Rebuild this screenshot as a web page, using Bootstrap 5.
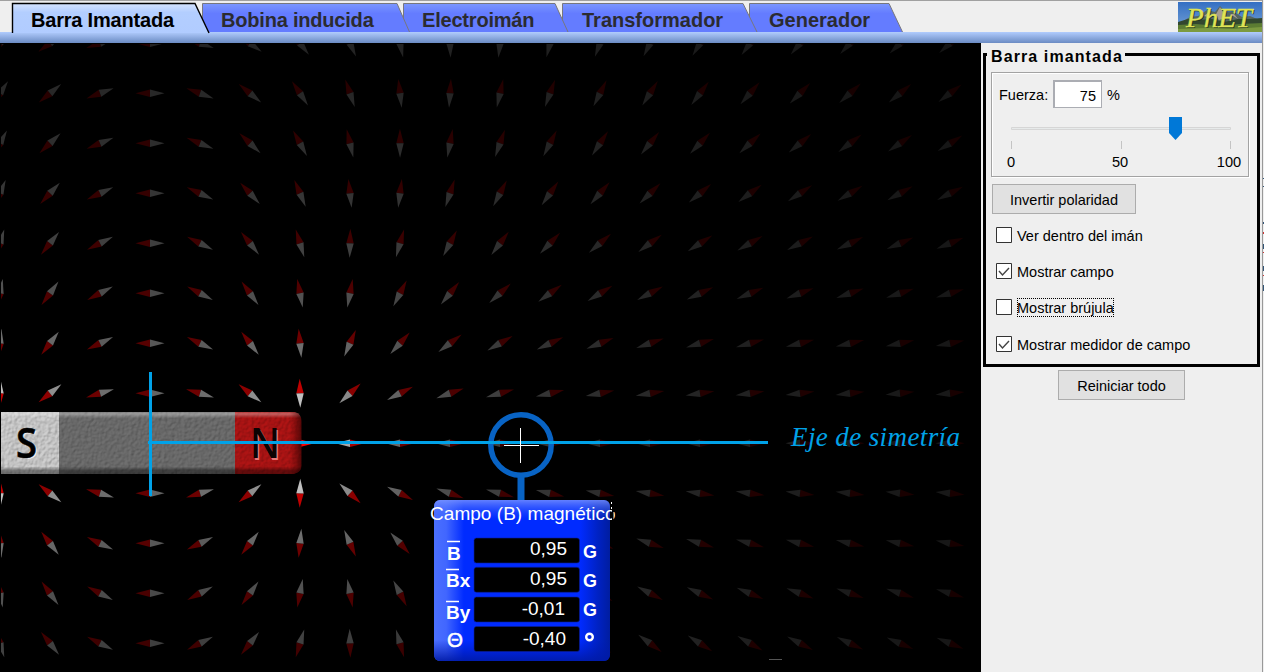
<!DOCTYPE html>
<html lang="es">
<head>
<meta charset="utf-8">
<meta name="viewport" content="width=device-width, initial-scale=1">
<title>Barra Imantada</title>
<link href="https://cdn.jsdelivr.net/npm/bootstrap@5.3.0/dist/css/bootstrap.min.css" rel="stylesheet">
<style>
body{font-family:"Liberation Sans",Arial,sans-serif;font-size:14.5px;line-height:18px;color:#000;background:#efefef;overflow:hidden}
.app{width:1264px;height:672px}
.window{width:1262px}
.tabrow{height:32px;border-top:1px solid #a0a0a0;padding-left:12px}
.tab{position:relative;height:31px;padding:0;color:#2b2b30;font-weight:700;font-size:20px;line-height:38px;white-space:nowrap;background:none;border:0;text-align:left}
.tab svg{position:absolute;left:0;top:0;overflow:visible}
.tab span{position:relative;display:inline-block;padding-left:19px;letter-spacing:-.2px}
.tab.wide span{padding-left:20px;letter-spacing:0}
.tab.on{color:#000}
.strip{height:11px;background:linear-gradient(#b1ccfd,#6b8bc3);}
.logo{width:84px;height:30px;margin-top:1px;overflow:visible}
.scene{width:981px;height:629px;background:#000}
.side{width:281px;padding:10px 0 0 2px}
.group{position:relative;width:277px;height:314px;border:3px solid #000}
.caption{position:absolute;left:1px;top:-9px;padding:0 2px 0 4px;background:#efefef;font-weight:700;font-size:16px;line-height:20px;letter-spacing:1.1px;white-space:nowrap}
.inset{width:258px;height:105px;margin:16px 0 0 5px;border:1px solid #a3a3a3;box-shadow:1px 1px 0 #fff,inset 1px 1px 0 #fff}
.num{width:49px;height:28px;border:2px solid #abadb3;border-right-width:1px;border-bottom-width:1px;background:#fff;padding:2px 5px 0 0;text-align:right;font:inherit;border-radius:0;outline:0;position:relative;top:-1px}
.slider{display:block;width:256px;height:66px}
.flat{border:1px solid #acacac;background:#e1e1e1;border-radius:0;padding:2px 0 0;height:30px;font:inherit;color:#000}
.opt{height:36px;gap:5px;padding-left:10px}
.opt svg{flex:none}
.opt span{padding-top:1px;margin-bottom:-1px}
.focus{outline:1px dotted #000;outline-offset:-1px}
</style>
</head>
<body>
<div class="app d-flex">
<div class="window d-flex flex-column">
<header class="tabrow d-flex justify-content-between">
<nav class="d-flex">
<button class="tab on" style="width:190px;z-index:5"><svg width="200" height="32"><path fill="url(#tabOn)" stroke="#000" stroke-width="1.4" d="M.5 32V2.5H183L197 32"/></svg><span>Barra Imantada</span></button>
<button class="tab" style="width:201px;z-index:4"><svg width="208" height="32"><path fill="url(#tabOff)" stroke="#77777d" d="M.5 31V2.5H195L207.500 31"/></svg><span>Bobina inducida</span></button>
<button class="tab" style="width:159px;z-index:3"><svg width="166" height="32"><path fill="url(#tabOff)" stroke="#77777d" d="M.5 31V2.500H152L165 31"/></svg><span>Electroimán</span></button>
<button class="tab wide" style="width:187px;z-index:2"><svg width="196" height="32"><path fill="url(#tabOff)" stroke="#77777d" d="M.5 31V2.500H181L195 31"/></svg><span>Transformador</span></button>
<button class="tab wide" style="width:155px;z-index:1"><svg width="155" height="32"><path fill="url(#tabOff)" stroke="#77777d" d="M.5 31V2.500H140L153.500 31"/></svg><span>Generador</span></button>
</nav>
<svg class="logo" viewBox="0 0 84 30">
<defs>
<linearGradient id="tabOn" x2="0" y2="1"><stop stop-color="#d5e4ff"/><stop offset=".3" stop-color="#b3ceff"/><stop offset="1" stop-color="#b1ccff"/></linearGradient>
<linearGradient id="tabOff" x2="0" y2="1"><stop stop-color="#7b97ff"/><stop offset=".35" stop-color="#647cff"/><stop offset="1" stop-color="#647cff"/></linearGradient>
<linearGradient id="sky" x2="0" y2="1"><stop stop-color="#346fc3"/><stop offset="1" stop-color="#78a4d7"/></linearGradient>
<filter id="soft" x="0" y="0" width="1" height="1"><feGaussianBlur stdDeviation=".5"/></filter>
</defs>
<path fill="url(#sky)" d="M0 0h84v30H0z"/>
<g filter="url(#soft)">
<path fill="#566660" d="M0 22L12 15 20 14 29 8 37 10 42 4 48 10 56 10 64 15 72 14 84 19V30H0z"/>
<path fill="#a79c91" d="M26 14l5-4 3 6zM37 14l5-9 3 5 2 6-6 2zM52 12l4 0 4 5z"/>
<path fill="#30472e" d="M0 20l10-3 10 1 14-1 12 3 14-3 12 0 12-1v9H0z"/>
<path fill="#5b7b33" d="M0 23l18-1 22 2 22-2 22-1v9H0z"/>
<path fill="#7c9a41" d="M0 27l30-1 24 1 30-2v5H0z"/>
</g>
<g font-family="Liberation Serif,serif" font-style="italic" font-size="27"><text x="9" y="26" textLength="66" lengthAdjust="spacingAndGlyphs" fill="#20301c">PhET</text><text x="8" y="25" textLength="66" lengthAdjust="spacingAndGlyphs" fill="#dfe356" stroke="#dfe356" stroke-width=".4">PhET</text></g>
</svg>
</header>
<div class="strip"></div>
<main class="d-flex flex-grow-1">
<svg class="scene" viewBox="0 43 981 629">
<defs>
<filter id="stone" x="0" y="0" width="1" height="1" color-interpolation-filters="sRGB">
<feTurbulence type="fractalNoise" baseFrequency=".3" numOctaves="2" seed="4"/>
<feDiffuseLighting surfaceScale=".6" diffuseConstant="1.08" lighting-color="#fff"><feDistantLight azimuth="225" elevation="60"/></feDiffuseLighting>
<feComposite in2="SourceGraphic" operator="arithmetic" k1="1"/>
<feComposite in2="SourceGraphic" operator="in"/>
</filter>
<linearGradient id="bevel" x2="0" y2="1"><stop stop-color="#fff" stop-opacity=".15"/><stop offset=".03" stop-color="#fff" stop-opacity=".33"/><stop offset=".1" stop-color="#fff" stop-opacity="0"/><stop offset=".88" stop-color="#000" stop-opacity="0"/><stop offset=".94" stop-color="#000" stop-opacity=".4"/><stop offset="1" stop-color="#000" stop-opacity=".45"/></linearGradient>
<linearGradient id="bevelEnd"><stop stop-color="#400" stop-opacity="0"/><stop offset="1" stop-color="#200" stop-opacity=".65"/></linearGradient>
<linearGradient id="boxX"><stop stop-color="#4b70ff"/><stop offset=".07" stop-color="#4166ff"/><stop offset=".17" stop-color="#002bff"/><stop offset=".83" stop-color="#002bff"/><stop offset=".93" stop-color="#0022c4"/><stop offset="1" stop-color="#001da0"/></linearGradient>
<linearGradient id="boxY" x2="0" y2="1"><stop stop-color="#7b95ff" stop-opacity=".8"/><stop offset=".12" stop-color="#315aff" stop-opacity="0"/><stop offset=".87" stop-color="#0019b0" stop-opacity="0"/><stop offset="1" stop-color="#001aa5" stop-opacity=".9"/></linearGradient>
<clipPath id="field"><path d="M1 44H981V672H1z"/></clipPath>
</defs>
<g id="needles" clip-path="url(#field)"></g>
<g filter="url(#stone)"><path fill="#cfcfcf" d="M1 412H59V474H1z"/><path fill="#6f6f6f" d="M59 412H235V474H59z"/><path fill="#b01414" d="M235 412H295Q301.500 414 301.500 421V466Q301.500 472 294 474H235z"/></g>
<path fill="url(#bevel)" d="M1 412H295Q301.500 414 301.500 421V466Q301.500 472 294 474H1z"/>
<path fill="url(#bevelEnd)" d="M290 412H295Q301.500 414 301.500 421V466Q301.500 472 294 474H290z"/>
<g font-family="Open Sans,sans-serif" font-weight="600" font-size="42">
<text x="17.500" y="458.500" textLength="21" lengthAdjust="spacingAndGlyphs" fill="#ececec">S</text><text x="16" y="457.500" textLength="21" lengthAdjust="spacingAndGlyphs" stroke="#000" stroke-width=".6">S</text>
<text x="251.500" y="459.500" textLength="30" lengthAdjust="spacingAndGlyphs" fill="#e77878">N</text><text x="250" y="458" textLength="30" lengthAdjust="spacingAndGlyphs" fill="#0c0303">N</text>
</g>
<g fill="none">
<path stroke="#0863c4" stroke-width="7" d="M521 477V500"/>
<circle cx="521" cy="445" r="30.200" stroke="#0863c4" stroke-width="5.500"/>
<path stroke="#00a2e8" stroke-width="3" d="M150.500 372V496M148 442.500H768"/>
<path stroke="#fff" d="M520.500 428V463M504 445.500H539"/>
<path stroke="#555" d="M769 659.500H782"/>
</g>
<text x="791" y="446" font-family="Liberation Serif,serif" font-style="italic" font-size="27" fill="#00a2e8" textLength="169">Eje de simetría</text>
<rect x="434" y="500" width="176" height="161" rx="6" fill="url(#boxX)"/>
<rect x="434" y="500" width="176" height="161" rx="6" fill="url(#boxY)"/>
<g stroke="#0a1f9a" stroke-width=".6"><rect x="474" y="538" width="105.500" height="25" rx="2.500"/><rect x="474" y="567.300" width="105.500" height="25" rx="2.500"/><rect x="474" y="597" width="105.500" height="25" rx="2.500"/><rect x="474" y="626.500" width="105.500" height="25" rx="2.500"/></g>
<g font-family="Liberation Sans,sans-serif" fill="#fff" font-size="19">
<text x="430" y="520" textLength="185.500">Campo (B) magnético</text>
<path fill="#000" d="M612 503h1.500v17h-1.500zM613 503h3v9h-3z"/><path d="M611 502h1v2h-1zM611 507h1v2h-1z"/>
<g text-anchor="end"><text x="567" y="555">0,95</text><text x="567" y="585">0,95</text><text x="565" y="615">-0,01</text><text x="566" y="645">-0,40</text></g>
<g font-weight="700" font-size="19"><text x="447" y="559.500">B</text><text x="446" y="587">Bx</text><text x="446" y="619">By</text><text x="583" y="557.500" textLength="14" lengthAdjust="spacingAndGlyphs">G</text><text x="583" y="587" textLength="14" lengthAdjust="spacingAndGlyphs">G</text><text x="583" y="616" textLength="14" lengthAdjust="spacingAndGlyphs">G</text></g>
<text x="447" y="647" font-size="20" textLength="16" lengthAdjust="spacingAndGlyphs" stroke="#fff" stroke-width=".5">Θ</text>
<circle cx="589.500" cy="637" r="3.300" fill="none" stroke="#fff" stroke-width="2.400"/>
<path stroke="#fff" stroke-width="1.300" d="M447 541.500H460M446 569.500H459M446 601.500H459"/>
</g>
</svg>
<aside class="side">
<section class="group">
<div class="caption">Barra imantada</div>
<div class="inset">
<label class="d-flex align-items-center" style="height:35px;padding:9px 0 0 7px"><span style="width:54px">Fuerza:</span><input class="num" value="75"><span style="padding-left:5px">%</span></label>
<svg class="slider" viewBox="992 108 256 66"><path fill="#e7eaea" stroke="#d6d6d6" d="M1011.500 127.500H1230.500V129.500H1011.500z"/><path stroke="#c4c4c4" d="M1011.500 141V149M1121.500 141V149M1230.500 141V149"/><path fill="#0078d7" d="M1169 117h13v16l-6.500 7-6.500-7z"/><g font-size="14.600" text-anchor="middle"><text x="1011" y="167">0</text><text x="1120" y="167">50</text><text x="1229" y="167">100</text></g></svg>
</div>
<button class="flat" style="width:144px;margin:7px 0 3px 6px;display:block">Invertir polaridad</button>
<label class="opt d-flex align-items-center"><svg width="16" height="16"><path fill="#fff" stroke="#333" d="M.5.5h15v15H.5z"/></svg><span>Ver dentro del imán</span></label>
<label class="opt d-flex align-items-center"><svg width="16" height="16"><path fill="#fff" stroke="#333" d="M.5.5h15v15H.5z"/><path fill="none" stroke="#444" stroke-width="1.400" d="M3 8l3.500 4L13 5"/></svg><span>Mostrar campo</span></label>
<label class="opt d-flex align-items-center"><svg width="16" height="16"><path fill="#fff" stroke="#333" d="M.5.5h15v15H.5z"/></svg><span class="focus">Mostrar brújula</span></label>
<label class="opt d-flex align-items-center" style="padding-top:1px"><svg width="16" height="16"><path fill="#fff" stroke="#333" d="M.5.5h15v15H.5z"/><path fill="none" stroke="#444" stroke-width="1.400" d="M3 8l3.500 4L13 5"/></svg><span>Mostrar medidor de campo</span></label>
</section>
<button class="flat d-block" style="width:127px;margin:3px 0 0 75px">Reiniciar todo</button>
</aside>
</main>
</div>
<svg width="2" height="672"><path fill="#efefef" d="M0 0h2v672H0z"/><path fill="#999" d="M0 0h1v672H0z"/><path fill="#357" d="M1 178h1v1h-1zM1 186h1v1h-1zM1 222h1v2h-1zM1 244h1v5h-1zM1 266h1v5h-1zM1 285h1v6h-1z"/><path fill="#c33" d="M1 232h1v2h-1zM1 252h1v1h-1zM1 275h1v1h-1z"/></svg>
</div>
<script src="https://cdn.jsdelivr.net/npm/bootstrap@5.3.0/dist/js/bootstrap.bundle.min.js"></script>
<script>
// Field of a bar magnet: charged pole faces at x=0 (S) and x=300 (N), sampled along their height.
const axisY = 443, faces = [-20, -10, 0, 10, 20];
function fieldAt(x, y) {
  let bx = 0, by = 0;
  for (const [px, q] of [[300, 1], [0, -1]]) for (const f of faces) {
    const dx = x - px, dy = y - axisY - f, r = Math.hypot(dx, dy) + 1;
    bx += q * dx / r ** 3 / faces.length;
    by += q * dy / r ** 3 / faces.length;
  }
  return [bx, by];
}
let out = '';
for (let y = 43; y <= 643; y += 50) for (let x = 0; x <= 950; x += 50) {
  const [bx, by] = fieldAt(x, y);
  let a = Math.atan2(by, bx) * 180 / Math.PI;
  let g = Math.min(255, Math.round(100 * (Math.hypot(bx, by) / 7.6e-5) ** 0.35));
  if (x === 300 && y === axisY) { a = 0; g = 255; }
  out += `<g transform="translate(${x} ${y + .3}) rotate(${a.toFixed(1)})"><path fill="rgb(${g},0,0)" d="M0-3.700L14.500 0 0 3.700z"/><path fill="rgb(${g},${g},${g})" d="M0-3.700L-14.500 0 0 3.700z"/></g>`;
}
document.getElementById('needles').innerHTML = out;
</script>
</body>
</html>
